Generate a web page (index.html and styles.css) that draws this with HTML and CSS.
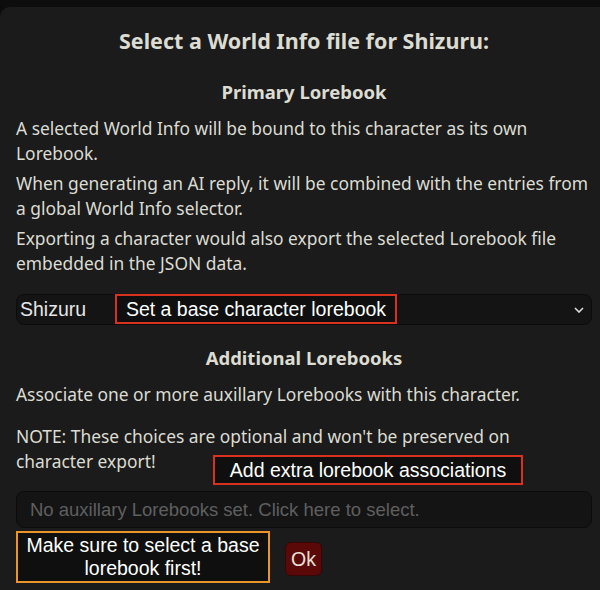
FILE: index.html
```html
<!DOCTYPE html>
<html>
<head>
<meta charset="utf-8">
<link rel="stylesheet" href="styles.css">
</head>
<body>
<div class="dialog">
  <h2 class="title">Select a World Info file for Shizuru:</h2>
  <h3 class="subtitle">Primary Lorebook</h3>
  <p class="para para-first">A selected World Info will be bound to this character as its own Lorebook.</p>
  <p class="para">When generating an AI reply, it will be combined with the entries from a global World Info selector.</p>
  <p class="para">Exporting a character would also export the selected Lorebook file embedded in the JSON data.</p>
  <div class="select">
    <span class="select-value">Shizuru</span>
    <svg class="chevron" width="10" height="6" viewBox="0 0 10 6"><path d="M1 1 L5 5 L9 1" fill="none" stroke="#ddd" stroke-width="1.6"/></svg>
    <div class="note note-red note-base">Set a base character lorebook</div>
  </div>
  <h3 class="subtitle subtitle-2">Additional Lorebooks</h3>
  <p class="para para-assoc">Associate one or more auxillary Lorebooks with this character.</p>
  <div class="note-wrap">
    <p class="para note-text">NOTE: These choices are optional and won't be preserved on character export!</p>
    <div class="note note-red note-extra">Add extra lorebook associations</div>
  </div>
  <div class="aux-input">No auxillary Lorebooks set. Click here to select.</div>
  <div class="actions">
    <div class="note note-orange">Make sure to select a base lorebook first!</div>
    <button class="ok">Ok</button>
  </div>
</div>
</body>
</html>
```
FILE: styles.css
```css
html, body {
  margin: 0;
  padding: 0;
  background: #0d0d0d;
  overflow: hidden;
  width: 600px;
  height: 590px;
}
.dialog {
  margin-top: 7px;
  width: 630px;
  height: 600px;
  box-sizing: border-box;
  background: #1b1b1b;
  border-radius: 10px;
  padding: 20px 38px 0 16px;
  font-family: "Noto Sans", sans-serif;
  color: #dcdcd2;
}
.title {
  font-size: 21.5px;
  font-weight: bold;
  text-align: center;
  margin: 0;
  line-height: 28px;
}
.subtitle {
  font-size: 18.5px;
  font-weight: bold;
  text-align: center;
  margin: 24px 0 0;
  line-height: 26px;
}
.para {
  font-size: 17.4px;
  line-height: 25px;
  margin: 5px 0 0;
}
.para-first { margin-top: 11px; }
.select {
  position: relative;
  margin-top: 18px;
  height: 31px;
  box-sizing: border-box;
  background: #141414;
  border: 1px solid #0c0c0c;
  border-radius: 8px;
  display: flex;
  align-items: center;
  justify-content: space-between;
  padding: 0 7px 0 3px;
  font-family: "Liberation Sans", Arial, sans-serif;
  font-size: 19.5px;
  color: #e6e6e6;
}
.chevron { display: block; }
.note {
  position: absolute;
  box-sizing: border-box;
  background: #0f0f0f;
  font-family: "Liberation Sans", Arial, sans-serif;
  color: #ffffff;
  font-size: 19.5px;
  text-align: center;
}
.note-red { border: 2px solid #d8321f; }
.note-orange { border: 2px solid #e8962a; }
.note-base {
  left: 98px;
  top: -1px;
  width: 282px;
  height: 30px;
  line-height: 26px;
}
.subtitle-2 { margin-top: 20px; }
.para-assoc { margin-top: 11px; }
.note-wrap { position: relative; margin-top: 17px; }
.note-wrap .note-text { margin-top: 0; max-width: 550px; }
.note-extra {
  left: 197px;
  top: 31px;
  width: 310px;
  height: 30px;
  line-height: 26px;
}
.aux-input {
  margin-top: 17px;
  height: 37px;
  box-sizing: border-box;
  background: #141414;
  border: 1px solid #0c0c0c;
  border-radius: 8px;
  padding: 0 13px;
  font-family: "Liberation Sans", Arial, sans-serif;
  font-size: 18.5px;
  line-height: 35px;
  color: #5f5f5f;
}
.actions {
  position: relative;
  height: 60px;
  display: flex;
  align-items: flex-start;
  padding-left: 269px;
  padding-top: 14px;
  box-sizing: border-box;
}
.note-orange {
  left: 0;
  top: 3px;
  width: 254px;
  height: 52px;
  padding-top: 1px;
  line-height: 23px;
}
.ok {
  width: 37px;
  height: 34px;
  background: #5a0808;
  border: 1px solid #3a0505;
  border-radius: 6px;
  color: #e8e0d8;
  font-family: "Liberation Sans", Arial, sans-serif;
  font-size: 19.5px;
  padding: 0;
}
```
